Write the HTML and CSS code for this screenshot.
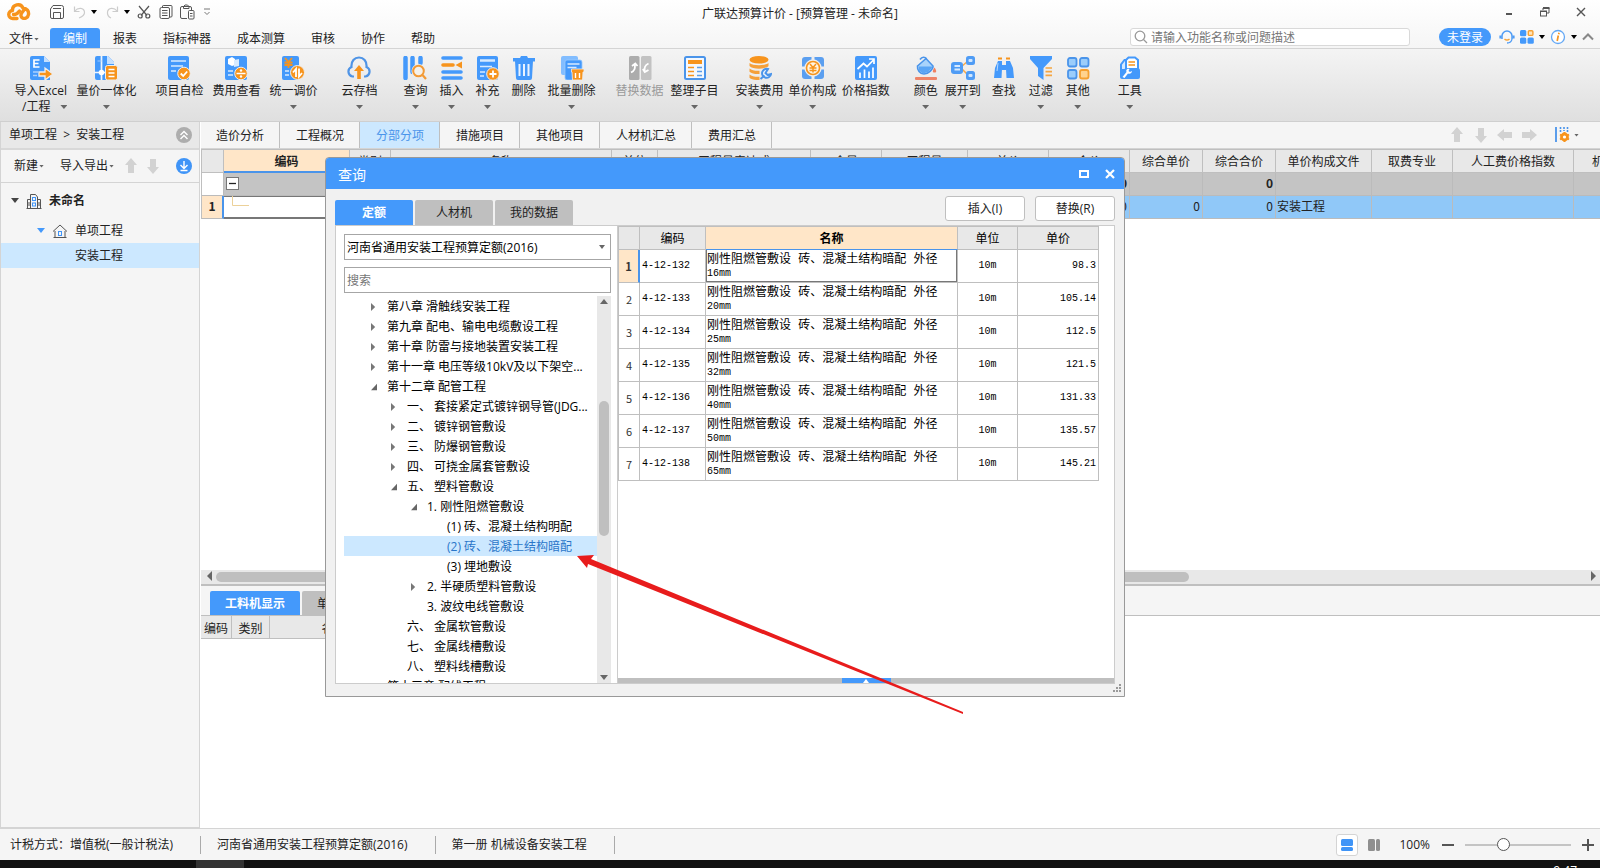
FILE: index.html
```html
<!DOCTYPE html>
<html lang="zh-CN">
<head>
<meta charset="utf-8">
<title>广联达预算计价 - [预算管理 - 未命名]</title>
<link rel="stylesheet" href="styles.css">
</head>
<body>
<div class="app">
  <header class="top">
    <div class="titlebar">
      <div class="quick">
        <svg class="logo" width="24" height="18" viewBox="0 0 24 18"><g fill="none" stroke="#f7941d" stroke-width="3.400" stroke-linecap="round" stroke-linejoin="round"><path d="M10 15.500H6a4 4 0 0 1-.5-8A5.500 5.500 0 0 1 16 5c4 .5 6 3 5.500 6.500-.5 3.500-4 4.500-6 3.500-2-1-2-3.500-.5-5.500L17 7"/><path d="M6.500 11.500c3 .5 4-1 6-3.500"/></g></svg>
        <button class="q save" aria-label="保存"><svg width="16" height="16" viewBox="0 0 16 16" fill="none" stroke="#555"><path d="M1.500 13V5L4 1.500h8.500a2 2 0 0 1 2 2V13a1.500 1.500 0 0 1-1.500 1.500H3A1.500 1.500 0 0 1 1.500 13zM4 4.500h8M4.500 14.500v-6h7v6"/></svg></button>
        <button class="q undo" aria-label="撤销"><svg width="14" height="14" viewBox="0 0 14 14" fill="none" stroke="#ccc" stroke-width="1.200"><path d="M1.500 1.500v5h5M2 6c3-4 9-3.500 9.500 1 .3 3-3 5-5.500 6"/></svg></button>
        <span class="tri black"></span>
        <button class="q redo" aria-label="恢复"><svg width="14" height="14" viewBox="0 0 14 14" fill="none" stroke="#ccc" stroke-width="1.200"><path d="M12.500 1.500v5h-5M12 6C9 2 3 2.500 2.500 7c-.3 3 1 5 3.500 6"/></svg></button>
        <span class="tri black"></span>
        <button class="q cut" aria-label="剪切"><svg width="14" height="14" viewBox="0 0 14 14" fill="none" stroke="#555" stroke-width="1.200"><path d="M2 1l8 9.500M12 1L4 10.500"/><circle cx="3.200" cy="11" r="2"/><circle cx="10.800" cy="11" r="2"/></svg></button>
        <button class="q copy" aria-label="复制"><svg width="14" height="16" viewBox="0 0 14 16" fill="none" stroke="#555"><path d="M3.500 3V2A.8.8 0 0 1 4.300 1.500H12a1 1 0 0 1 1 1V12a1 1 0 0 1-1 1h-1"/><rect x="1" y="3.500" width="9.500" height="11" rx="1.500"/><path d="M3 6.500h5.500M3 9h5.500M3 11.500h5.500"/></svg></button>
        <button class="q paste" aria-label="粘贴"><svg width="15" height="16" viewBox="0 0 15 16" fill="none" stroke="#555"><path d="M7 14.500H2A1.500 1.500 0 0 1 .5 13V4A1.500 1.500 0 0 1 2 2.500h8A1.500 1.500 0 0 1 11.500 4v2M3.500 4.500v-2L5 1h2.500L9 2.500v2z"/><rect x="8.500" y="6.500" width="5.500" height="8.500" rx="1"/><path d="M10 9.500h2.500M10 12h2.500"/></svg></button>
        <svg width="8" height="8" viewBox="0 0 8 8" fill="none" stroke="#777"><path d="M1 1h6M1.500 4L4 6.500 6.500 4"/></svg>
      </div>
      <h1 class="title">广联达预算计价 - [预算管理 - 未命名]</h1>
      <div class="winbtns">
        <button aria-label="最小化"><svg width="12" height="12" viewBox="0 0 12 12"><path d="M3 8h6" stroke="#555" stroke-width="2"/></svg></button>
        <button aria-label="还原"><svg width="12" height="12" viewBox="0 0 12 12" fill="none" stroke="#555"><path d="M4 4V2h6v5H8"/><path d="M4 2h6.500" stroke-width="2"/><rect x="1.500" y="5" width="6" height="5"/><path d="M1.500 5.500h6"/></svg></button>
        <button aria-label="关闭"><svg width="12" height="12" viewBox="0 0 12 12"><path d="M2 2l8 8M10 2l-8 8" stroke="#555" stroke-width="1.400"/></svg></button>
      </div>
    </div>
    <div class="menubar">
      <nav class="menus">
        <button class="file">文件<span class="tri"></span></button>
        <button class="on">编制</button><button>报表</button><button>指标神器</button><button>成本测算</button><button>审核</button><button>协作</button><button>帮助</button>
      </nav>
      <label class="find"><svg width="14" height="14" viewBox="0 0 14 14" fill="none" stroke="#999" stroke-width="1.300"><circle cx="6" cy="6" r="4.800"/><path d="M9.500 9.500L13 13"/></svg><input type="text" placeholder="请输入功能名称或问题描述"></label>
      <div class="account">
        <button class="login">未登录</button>
        <svg width="16" height="16" viewBox="0 0 16 16" fill="none"><path d="M3 10V7a5 5 0 0 1 10 0v3" stroke="#4f9cf5" stroke-width="1.500"/><path d="M1.500 6.500v3M14.500 6.500v3" stroke="#4f9cf5" stroke-width="2.200"/><path d="M13 10c-.5 3-3 4-5 4" stroke="#4f9cf5" stroke-width="1.300"/><path d="M5.500 10c1.500 1.300 3.500 1.300 5 0" stroke="#f7a030" stroke-width="1.500"/></svg>
        <svg width="14" height="14" viewBox="0 0 14 14"><g fill="#4499fb"><rect width="6.300" height="6.300" rx="1.500"/><rect y="7.500" width="6.300" height="6.300" rx="1.500"/><rect x="7.500" y="7.500" width="6.300" height="6.300" rx="1.500"/></g><rect x="8.300" y=".8" width="4.600" height="4.600" rx="1" fill="#ffe3b8" stroke="#f7a030" stroke-width="1.400"/></svg>
        <span class="tri black"></span>
        <svg width="16" height="16" viewBox="0 0 16 16"><circle cx="8" cy="8" r="6.500" fill="#fff" stroke="#64a8f5" stroke-width="1.300"/><path d="M9 3.800l-.3 1.400M8.300 6.500L7.200 12" stroke="#f7941d" stroke-width="1.700"/></svg>
        <span class="tri black"></span>
        <svg width="12" height="8" viewBox="0 0 12 8" fill="none" stroke="#888" stroke-width="2"><path d="M1 6.500l5-5 5 5"/></svg>
      </div>
    </div>
  </header>

  <div class="ribbon">
    <div class="grp g1">
      <button><svg viewBox="0 0 24 24"><path d="M3 0h12l6 6v18H3a2 2 0 0 1-2-2V2a2 2 0 0 1 2-2z" fill="#4499fb"/><path d="M15 0l6 6h-6z" fill="#c5e0ff"/><path d="M5 4h5.500M5 7.500h4.500M5 11h5.500M5 3.200v8.600" stroke="#fff" stroke-width="1.700"/><path d="M4 16h5M4 19.500h4" stroke="#a9d0ff" stroke-width="1.500"/><path d="M10 16h6v-4l8 6-8 6v-4h-6z" fill="#f7941d" stroke="#eee" stroke-width="1.300"/></svg><span>导入Excel</span><span class="line2">/工程<i class="tri"></i></span></button>
      <button><svg viewBox="0 0 24 24"><path d="M3 0h11l6 6v18H3a2 2 0 0 1-2-2V2a2 2 0 0 1 2-2z" fill="#4499fb"/><path d="M13 0h1l6 6v2h-7z" fill="#c5e0ff"/><path d="M7.500 0v24M0 16.500h14" stroke="#eef5fd" stroke-width="1.700"/><circle cx="7.500" cy="16.500" r="2.800" fill="#fff"/><path d="M3.500 5h4" stroke="#9bc9ff"/><rect x="11.500" y="9.500" width="12" height="14.500" rx="2" fill="#f7941d" stroke="#eee"/><path d="M14.500 13.500h6M14.500 17h6M14.500 20.400h6" stroke="#fff" stroke-width="1.500"/></svg><span>量价一体化</span><i class="tri"></i></button>
    </div>
    <div class="grp g2">
      <button><svg viewBox="0 0 24 24"><rect x="1" y="0" width="21" height="24" rx="2" fill="#4499fb"/><path d="M4 5h15M4 10h12M4 15h5" stroke="#d6eaff" stroke-width="1.700"/><circle cx="17" cy="17.500" r="6.300" fill="#f7941d" stroke="#eee"/><path d="M13.700 17.500l2.500 2.500 4-4.500" fill="none" stroke="#fff" stroke-width="1.800"/></svg><span>项目自检</span></button>
      <button><svg viewBox="0 0 24 24"><rect x="1" y="0" width="22" height="24" rx="2" fill="#4499fb"/><path d="M4 3l4-2 3 2v6l-3 1-4-2z" fill="#fff"/><path d="M10 4l5-1v7l-5 1z" fill="#d6eaff"/><path d="M4 15h5M4 19h5" stroke="#d6eaff" stroke-width="1.700"/><circle cx="17" cy="17.500" r="6.300" fill="#f7941d" stroke="#eee"/><path d="M12.500 17.500h9" stroke="#fff" stroke-width="1.500"/><circle cx="17" cy="14.500" r="1.200" fill="#fff"/><circle cx="17" cy="20.500" r="1.200" fill="#fff"/></svg><span>费用查看</span></button>
      <button><svg viewBox="0 0 24 24"><rect x="1" y="0" width="17" height="24" rx="2" fill="#4499fb"/><path d="M4 2l3.500 4L11 2M3.500 6.500h8M3.500 9h8M7.500 6v6" fill="none" stroke="#f7941d" stroke-width="1.800"/><path d="M4 15h4M4 19h4" stroke="#d6eaff" stroke-width="1.700"/><circle cx="16.500" cy="16.500" r="7" fill="#f7941d" stroke="#eee"/><path d="M15 21v-8l-3 3.500M18 12.500v8l3-3.500" fill="none" stroke="#fff" stroke-width="1.800"/></svg><span>统一调价</span><i class="tri"></i></button>
    </div>
    <div class="grp g3">
      <button><svg viewBox="0 0 24 24"><path d="M7 20.500H5.500a5 5 0 0 1-1-9.500C4 5 7.500 1.500 12 1.500S20 5 19.500 11a5 5 0 0 1-1 9.500H17" fill="none" stroke="#4f94e6" stroke-width="2.200"/><path d="M12 9l5 6h-3.200v8h-3.600v-8H7z" fill="#f7941d"/></svg><span>云存档</span><i class="tri"></i></button>
    </div>
    <div class="grp g4">
      <button><svg viewBox="0 0 24 24"><path d="M2.500 2v20M9.500 2v14M17.500 2v5" stroke="#4499fb" stroke-width="4.500" stroke-linecap="round"/><circle cx="15.500" cy="15" r="7" fill="#eee"/><circle cx="15.500" cy="15" r="5.300" fill="#f5f1ea" stroke="#f39a35" stroke-width="2"/><path d="M19.500 19l3.500 4" stroke="#f39a35" stroke-width="2.200"/></svg><span>查询</span><i class="tri"></i></button>
      <button><svg viewBox="0 0 24 24"><path d="M3 2h18M3 16h18M3 22h18" stroke="#4499fb" stroke-width="3.600" stroke-linecap="round"/><path d="M3 9h10" stroke="#f7941d" stroke-width="3.600" stroke-linecap="round"/><path d="M15.500 9l6.500-3.500v7z" fill="#f7941d"/></svg><span>插入</span><i class="tri"></i></button>
      <button><svg viewBox="0 0 24 24"><rect x="1" y="0" width="21" height="24" rx="2" fill="#4499fb"/><path d="M4 4.500h15" stroke="#d6eaff" stroke-width="2.500"/><path d="M4 10.500h12M4 16h5M4 20h4" stroke="#d6eaff" stroke-width="1.600"/><circle cx="17" cy="18" r="6.300" fill="#f7941d" stroke="#eee"/><path d="M17 14.500v7M13.500 18h7" stroke="#fff" stroke-width="1.800"/></svg><span>补充</span><i class="tri"></i></button>
      <button><svg viewBox="0 0 24 24"><path d="M1 2h7l1-2h6l1 2h7v3.500H1zM3 5h18l-1 17a2 2 0 0 1-2 2H6a2 2 0 0 1-2-2z" fill="#4499fb"/><path d="M7.500 8v12M12 8v12M16.500 8v12" stroke="#e9f3ff" stroke-width="2"/></svg><span>删除</span></button>
      <button><svg viewBox="0 0 24 24"><rect x="1" y="0" width="17" height="19" rx="2" fill="#82bdff"/><rect x="5" y="4" width="17" height="20" rx="2" fill="#4499fb" stroke="#9bcaff" stroke-width=".8"/><path d="M7.500 8h12M7.500 11.500h9" stroke="#d6eaff" stroke-width="1.300"/><path d="M11.500 13h12.500v3H23l-.5 8h-10l-.5-8h-.5z" fill="#f7941d" stroke="#eee" stroke-width=".8"/><path d="M15.500 17v5M19.500 17v5" stroke="#fff" stroke-width="1.400"/></svg><span>批量删除</span><i class="tri"></i></button>
    </div>
    <div class="grp g5">
      <button disabled><svg viewBox="0 0 24 24"><rect x="1" y="0" width="10.500" height="24" rx="1.500" fill="#acacac"/><rect x="13" y="0" width="10.500" height="24" rx="1.500" fill="#c2c2c2"/><path d="M3 16.500c4-2 4-4 4-8M4 10l3.300-2.500L9.500 10M20.500 7.500c-4 2-4 4-4 8M14.800 13l2 3 3.700-2" fill="none" stroke="#fff" stroke-width="1.800"/></svg><span>替换数据</span></button>
      <button><svg viewBox="0 0 24 24"><rect x="2" y="1" width="20" height="22" rx="1.500" fill="#f4f8fd" stroke="#4a94ea" stroke-width="2"/><rect x="5" y="4" width="14" height="4" fill="#f7941d"/><path d="M14 11.500h5M14 15.500h5M14 19.500h5" stroke="#5b9de8" stroke-width="1.600"/><path d="M5 11.500h6M5 15.500h6M5 19.500h6" stroke="#f7941d" stroke-width="1.600"/></svg><span>整理子目</span><i class="tri"></i></button>
    </div>
    <div class="grp g6">
      <button><svg viewBox="0 0 24 24"><ellipse cx="11" cy="3.800" rx="9.500" ry="3.800" fill="#f7941d"/><path d="M1.500 7c3 3 16 3 19 0v3c-3 3.500-16 3.500-19 0zM1.500 12.500c2 2 6 2.500 10 2.300v3.200c-4 .3-8-.5-10-2.300zM1.500 18.500c2 2 6 2.500 10 2.300V24c-4 .3-8-.5-10-2.300z" fill="#f5a03a"/><path d="M20 13a4.500 4.500 0 1 0 3 5l-3.500 1-2-2z" fill="#eef5fd" stroke="#4a94ea" stroke-width="2"/><path d="M16.500 19.500L12.500 23" stroke="#4a94ea" stroke-width="2"/></svg><span>安装费用</span><i class="tri"></i></button>
      <button><svg viewBox="0 0 24 24"><rect x="1" y="1" width="22" height="22" rx="3" fill="#5b9ff0"/><path d="M12 0v24M0 12h24" stroke="#eee" stroke-width="3"/><circle cx="12" cy="12" r="8" fill="#f7941d" stroke="#eee" stroke-width="1.300"/><circle cx="12" cy="12" r="5.700" fill="#fff4e2"/><path d="M9 8l3 3.500L15 8M8.500 12h7M8.500 14.500h7M12 11.500v5" fill="none" stroke="#f7941d" stroke-width="1.500"/></svg><span>单价构成</span><i class="tri"></i></button>
      <button><svg viewBox="0 0 24 24"><rect x="1" y="0" width="22" height="24" rx="2" fill="#4499fb"/><path d="M3.500 13l6-5.500 3.500 3L19.500 4M15 3h5v5" fill="none" stroke="#fff" stroke-width="1.700"/><path d="M6 16.500V22M10.500 13.500V22M15 15.500V22M19 11.500V22" stroke="#fff" stroke-width="1.700"/></svg><span>价格指数</span></button>
    </div>
    <div class="grp g7">
      <button><svg viewBox="0 0 24 24"><path d="M3.500 10L12 2.500l7 7.500c.5 3-4.500 8-9 8-4 0-7-4-6.500-8z" fill="#a9d3fb" stroke="#4a94ea" stroke-width="1.600"/><path d="M5 10.500h14l-5 5.500-5 1.500-4-3z" fill="#5aa5f5"/><path d="M6 3.500C8 .5 11 .5 12.500 3" fill="none" stroke="#4a94ea" stroke-width="1.600"/><path d="M20.500 11.500c2 3 2.500 5 0 5s-2-2 0-5z" fill="#f08060"/><rect x="1" y="21" width="22" height="3" rx="1" fill="#ee8468"/></svg><span>颜色</span><i class="tri"></i></button>
      <button><svg viewBox="0 0 24 24"><path d="M10 11l7-6M10 12l7 7" stroke="#f7a948" stroke-width="1.500"/><rect x="0" y="6" width="12" height="12" rx="3" fill="#4f9cf5"/><path d="M3.500 10h5.500M3.500 13.500h5.500" stroke="#d6eaff" stroke-width="2"/><rect x="15" y="0" width="9" height="9" rx="2.500" fill="#4f9cf5"/><rect x="17.500" y="3" width="4" height="3" rx="1" fill="#cfe6ff"/><rect x="15" y="15" width="9" height="9" rx="2.500" fill="#4f9cf5"/><rect x="17.500" y="18" width="4" height="3" rx="1" fill="#cfe6ff"/></svg><span>展开到</span><i class="tri"></i></button>
    </div>
    <div class="grp g8">
      <button><svg viewBox="0 0 24 24"><path d="M6 5h4v8l-.5 9H2l1-10zM14 5h4l3 7 1 10h-7.500L14 13z" fill="#4499fb"/><path d="M10 9h4v5h-4z" fill="#4499fb"/><path d="M6 2.500h4M14 2.500h4" stroke="#f7941d" stroke-width="2"/><path d="M5 15l1-8" stroke="#d6eaff" stroke-width=".8"/></svg><span>查找</span></button>
      <button><svg viewBox="0 0 24 24"><path d="M1 0h22v3l-8.500 9v12L9 20v-8L1 3z" fill="#4499fb"/><path d="M16.500 12h6.500M16.500 15.700h6.500M16.500 19.400h6.500" stroke="#f5a642" stroke-width="1.700"/></svg><span>过滤</span><i class="tri"></i></button>
      <button><svg viewBox="0 0 24 24" fill="#9bcdfb" stroke="#4a94ea" stroke-width="1.800"><rect x="2" y="2" width="8.500" height="8.500" rx="2"/><rect x="14" y="2" width="8.500" height="8.500" rx="2"/><rect x="2" y="14" width="8.500" height="8.500" rx="2"/><rect x="14" y="14" width="8.500" height="8.500" rx="2" fill="#ffd38f" stroke="#f5a030"/></svg><span>其他</span><i class="tri"></i></button>
    </div>
    <div class="grp g9">
      <button><svg viewBox="0 0 24 24"><path d="M3 14V8.500L6.500 4H8v10z" fill="#d6eaff" stroke="#4499fb" stroke-width="2"/><path d="M8 14V4l2.500-2.500H17L20 4v10z" fill="#fff" stroke="#4499fb" stroke-width="2"/><path d="M10.500 6h6.500M10.500 9h6.500" stroke="#f7941d" stroke-width="1.600"/><path d="M10 12h9.500a2.500 2.500 0 0 1 2.500 2.500V21a2 2 0 0 1-2 2H4a2 2 0 0 1-2-2v-7z" fill="#4499fb"/><path d="M4.500 21l4-5c-1-2 1-4 3-3l-1 2 1.500 1 2-1c0 2-2 3.500-4 2.500l-3.500 4.500z" fill="#fff"/></svg><span>工具</span><i class="tri"></i></button>
    </div>
  </div>

  <div class="work">
    <aside class="side">
      <div class="crumb"><span>单项工程&nbsp; &gt; &nbsp;安装工程</span><button aria-label="收起"><svg width="16" height="16" viewBox="0 0 16 16"><circle cx="8" cy="8" r="8" fill="#adadad"/><path d="M4.500 8L8 4.500 11.500 8M4.500 12L8 8.500l3.500 3.500" fill="none" stroke="#fff" stroke-width="1.400"/></svg></button></div>
      <div class="sidetools">
        <button>新建<span class="tri"></span></button>
        <button class="imp">导入导出<span class="tri"></span></button>
        <svg width="12" height="16" viewBox="0 0 12 16"><path d="M6 0l6 7H9v8H3V7H0z" fill="#d2d2d2"/></svg>
        <svg width="12" height="16" viewBox="0 0 12 16"><path d="M6 16l6-7H9V1H3v8H0z" fill="#d2d2d2"/></svg>
        <button class="down" aria-label="下载"><svg width="16" height="16" viewBox="0 0 16 16"><circle cx="8" cy="8" r="8" fill="#3f94f7"/><path d="M8 3v7M4.500 7L8 10.500 11.500 7M4.500 12.500h7" fill="none" stroke="#fff" stroke-width="1.400"/></svg></button>
      </div>
      <ul class="proj">
        <li class="p0"><span class="tri big"></span><svg width="16" height="16" viewBox="0 0 16 16" fill="none" stroke="#555"><path d="M.5 15.500h15M1.500 15V6.500h3M4.500 15V1.500h5L11.500 4v11M11.500 6.500h3V15"/><path d="M3 9v4M13 9v4"/><g stroke="#3f94f7"><rect x="6.500" y="4.500" width="3" height="3"/><rect x="6.500" y="10" width="3" height="3"/></g></svg><b>未命名</b></li>
        <li class="p1"><span class="tri big blue"></span><svg width="16" height="16" viewBox="0 0 16 16" fill="none" stroke="#555"><path d="M1 8.500L8 2l7 6.500M3 8v6.500M13 8v6.500M1.500 14.500h13"/><rect x="6.500" y="8.500" width="3" height="4" stroke="#3f94f7"/></svg><span>单项工程</span></li>
        <li class="p2 cur">安装工程</li>
      </ul>
    </aside>

    <main class="main">
      <div class="tabs">
        <button>造价分析</button><button>工程概况</button><button class="on">分部分项</button><button>措施项目</button><button>其他项目</button><button>人材机汇总</button><button>费用汇总</button>
        <div class="nav">
          <svg width="16" height="16" viewBox="0 0 16 16"><path d="M8 0l6 7h-3v8H5V7H2z"/></svg>
          <svg width="16" height="16" viewBox="0 0 16 16"><path d="M8 16l6-7h-3V1H5v8H2z"/></svg>
          <svg width="16" height="16" viewBox="0 0 16 16"><path d="M0 8l7-6v3h8v6H7v3z"/></svg>
          <svg width="16" height="16" viewBox="0 0 16 16"><path d="M16 8L9 2v3H1v6h8v3z"/></svg>
          <button class="cols" aria-label="列设置"><svg width="16" height="16" viewBox="0 0 16 16"><path d="M2 0v15" stroke="#4a94ea" stroke-width="1.800"/><path d="M6.500 0v6M10 0v4M13.500 0v5" stroke="#4a94ea" stroke-width="1.600" stroke-dasharray="2 1"/><circle cx="10.500" cy="10" r="3" fill="none" stroke="#f7941d" stroke-width="2.800"/><path d="M10.500 5v10M6 7.500l9 5M6 12.500l9-5" stroke="#f7941d" stroke-width="2"/><circle cx="10.500" cy="10" r="1.600" fill="#fff"/></svg><span class="tri"></span></button>
        </div>
      </div>
      <div class="sheet">
        <table class="grid">
          <colgroup><col class="w22"><col class="w126"><col class="w41"><col class="w221"><col class="w46"><col class="w153"><col class="w71"><col class="w86"><col class="w81"><col class="w81"><col class="w73"><col class="w73"><col class="w96"><col class="w81"><col class="w121"><col class="w121"></colgroup>
          <thead><tr><th></th><th class="hot">编码</th><th>类别</th><th>名称</th><th>单位</th><th>工程量表达式</th><th>含量</th><th>工程量</th><th>单价</th><th>合价</th><th>综合单价</th><th>综合合价</th><th>单价构成文件</th><th>取费专业</th><th>人工费价格指数</th><th>机械费价格指数</th></tr></thead>
          <tbody>
            <tr class="sum"><td class="rh"></td><td class="fold"><button aria-label="折叠"><svg width="13" height="13" viewBox="0 0 13 13"><rect x=".5" y=".5" width="12" height="12" fill="#fff" stroke="#777"/><path d="M3 6.500h7" stroke="#222" stroke-width="1.300"/></svg></button></td><td></td><td></td><td></td><td></td><td></td><td></td><td></td><td class="n">0</td><td></td><td class="n">0</td><td></td><td></td><td></td><td></td></tr>
            <tr class="sel"><td class="rh">1</td><td class="edit"><svg width="24" height="19" viewBox="0 0 24 19"><path d="M6.500 0v9.500H23" fill="none" stroke="#ecd199"/></svg></td><td></td><td></td><td></td><td></td><td></td><td></td><td></td><td class="n">0</td><td class="n">0</td><td class="n">0</td><td class="t">安装工程</td><td></td><td></td><td></td></tr>
          </tbody>
        </table>
      </div>
      <div class="hscroll"><svg width="6" height="10" viewBox="0 0 6 10"><path d="M5 0v10L0 5z" fill="#666"/></svg><div class="track"><div class="thumb"></div></div><svg width="6" height="10" viewBox="0 0 6 10"><path d="M1 0v10l5-5z" fill="#666"/></svg></div>
      <div class="subtabs"><button class="on">工料机显示</button><button>单价构成</button></div>
      <div class="detail">
        <table class="grid sub"><colgroup><col class="w31"><col class="w38"><col class="w128"></colgroup><thead><tr><th>编码</th><th>类别</th><th>名称</th></tr></thead></table>
      </div>
    </main>
  </div>

  <footer class="status">
    <span class="s1">计税方式：增值税(一般计税法)</span><span class="s2">河南省通用安装工程预算定额(2016)</span><span class="s3">第一册 机械设备安装工程</span>
    <div class="zoomer">
      <button class="view on" aria-label="上下布局"><svg width="12" height="12" viewBox="0 0 12 12" fill="#3f94f7"><rect width="12" height="7" rx="1.500"/><rect y="8" width="12" height="4" rx="1.500"/></svg></button>
      <button class="view" aria-label="左右布局"><svg width="12" height="12" viewBox="0 0 12 12" fill="#8f8f8f"><rect width="7" height="12" rx="1.500"/><rect x="8" width="4" height="12" rx="1.500"/></svg></button>
      <label for="zoom">100%</label>
      <button aria-label="缩小"><svg width="12" height="12" viewBox="0 0 12 12"><path d="M0 6h12" stroke="#555" stroke-width="2"/></svg></button>
      <input id="zoom" type="range" min="0" max="100" value="34">
      <button aria-label="放大"><svg width="12" height="12" viewBox="0 0 12 12"><path d="M0 6h12M6 0v12" stroke="#555" stroke-width="2"/></svg></button>
    </div>
  </footer>
  <div class="taskbar"><span class="task"></span><span class="clock">9:47</span></div>

  <section class="dialog" role="dialog" aria-labelledby="dlg">
    <div class="dhead"><h2 id="dlg">查询</h2>
      <button aria-label="最大化"><svg width="12" height="12" viewBox="0 0 12 12"><rect x="2" y="3" width="8" height="6" fill="none" stroke="#fff" stroke-width="2"/></svg></button>
      <button aria-label="关闭"><svg width="12" height="12" viewBox="0 0 12 12"><path d="M2 2l8 8M10 2l-8 8" stroke="#fff" stroke-width="2.200"/></svg></button>
    </div>
    <div class="dbar">
      <button class="dt on">定额</button><button class="dt">人材机</button><button class="dt">我的数据</button>
      <button class="act">插入(I)</button><button class="act">替换(R)</button>
    </div>
    <div class="dbody">
      <div class="left">
        <div class="pick"><select aria-label="定额库"><option>河南省通用安装工程预算定额(2016)</option></select><span class="tri"></span></div>
        <input class="srch" type="text" placeholder="搜索" aria-label="搜索">
        <div class="treebox">
          <ul class="tree">
            <li class="l0"><i class="c"></i><span>第八章 滑触线安装工程</span></li>
            <li class="l0"><i class="c"></i><span>第九章 配电、输电电缆敷设工程</span></li>
            <li class="l0"><i class="c"></i><span>第十章 防雷与接地装置安装工程</span></li>
            <li class="l0"><i class="c"></i><span>第十一章 电压等级10kV及以下架空...</span></li>
            <li class="l0"><i class="o"></i><span>第十二章 配管工程</span></li>
            <li class="l1"><i class="c"></i><span>一、 套接紧定式镀锌钢导管(JDG...</span></li>
            <li class="l1"><i class="c"></i><span>二、 镀锌钢管敷设</span></li>
            <li class="l1"><i class="c"></i><span>三、 防爆钢管敷设</span></li>
            <li class="l1"><i class="c"></i><span>四、 可挠金属套管敷设</span></li>
            <li class="l1"><i class="o"></i><span>五、 塑料管敷设</span></li>
            <li class="l2"><i class="o"></i><span>1. 刚性阻燃管敷设</span></li>
            <li class="l3"><i></i><span>(1) 砖、混凝土结构明配</span></li>
            <li class="l3 cur"><i></i><span>(2) 砖、混凝土结构暗配</span></li>
            <li class="l3"><i></i><span>(3) 埋地敷设</span></li>
            <li class="l2"><i class="c"></i><span>2. 半硬质塑料管敷设</span></li>
            <li class="l2"><i></i><span>3. 波纹电线管敷设</span></li>
            <li class="l1"><i></i><span>六、 金属软管敷设</span></li>
            <li class="l1"><i></i><span>七、 金属线槽敷设</span></li>
            <li class="l1"><i></i><span>八、 塑料线槽敷设</span></li>
            <li class="l0"><i></i><span>第十三章 配线工程</span></li>
          </ul>
          <div class="vscroll"><svg width="8" height="5" viewBox="0 0 8 5"><path d="M0 5h8L4 0z" fill="#666"/></svg><div class="vtrack"><div class="vthumb"></div></div><svg width="8" height="5" viewBox="0 0 8 5"><path d="M0 0h8L4 5z" fill="#666"/></svg></div>
        </div>
      </div>
      <div class="right">
        <table class="quota">
          <colgroup><col class="w21"><col class="w66"><col class="w252"><col class="w60"><col class="w81"></colgroup>
          <thead><tr><th></th><th>编码</th><th class="hot">名称</th><th>单位</th><th>单价</th></tr></thead>
          <tbody>
            <tr class="first"><td class="rh">1</td><td class="m">4-12-132</td><td class="nm">刚性阻燃管敷设 砖、混凝土结构暗配 外径<span>16mm</span></td><td class="m u">10m</td><td class="m n">98.3</td></tr>
            <tr><td class="rh">2</td><td class="m">4-12-133</td><td class="nm">刚性阻燃管敷设 砖、混凝土结构暗配 外径<span>20mm</span></td><td class="m u">10m</td><td class="m n">105.14</td></tr>
            <tr><td class="rh">3</td><td class="m">4-12-134</td><td class="nm">刚性阻燃管敷设 砖、混凝土结构暗配 外径<span>25mm</span></td><td class="m u">10m</td><td class="m n">112.5</td></tr>
            <tr><td class="rh">4</td><td class="m">4-12-135</td><td class="nm">刚性阻燃管敷设 砖、混凝土结构暗配 外径<span>32mm</span></td><td class="m u">10m</td><td class="m n">121.5</td></tr>
            <tr><td class="rh">5</td><td class="m">4-12-136</td><td class="nm">刚性阻燃管敷设 砖、混凝土结构暗配 外径<span>40mm</span></td><td class="m u">10m</td><td class="m n">131.33</td></tr>
            <tr><td class="rh">6</td><td class="m">4-12-137</td><td class="nm">刚性阻燃管敷设 砖、混凝土结构暗配 外径<span>50mm</span></td><td class="m u">10m</td><td class="m n">135.57</td></tr>
            <tr><td class="rh">7</td><td class="m">4-12-138</td><td class="nm">刚性阻燃管敷设 砖、混凝土结构暗配 外径<span>65mm</span></td><td class="m u">10m</td><td class="m n">145.21</td></tr>
          </tbody>
        </table>
        <div class="splitter"><button aria-label="展开"><svg width="6" height="4" viewBox="0 0 6 4"><path d="M0 4h6L3 0z" fill="#fff"/></svg></button></div>
      </div>
    </div>
    <svg class="grip" width="9" height="9" viewBox="0 0 9 9" fill="#999"><path d="M6 0h2v2H6zM3 3h2v2H3zM6 3h2v2H6zM0 6h2v2H0zM3 6h2v2H3zM6 6h2v2H6z"/></svg>
  </section>
  <svg class="pointer" width="390" height="162" viewBox="0 0 390 162"><path d="M1 1l17-1-3 4 372 153v2L12 9l-1 4z" fill="#e81c1c"/></svg>
</div>
</body>
</html>
```
FILE: styles.css
```css
* { box-sizing: border-box; }
body { margin: 0; font: 12px/16px "Open Sans", "Noto Sans CJK SC", sans-serif; color: #222; background: #fff; }
button, input, select { font: inherit; color: inherit; border: 0; padding: 0; margin: 0; background: none; border-radius: 0; }
button { display: flex; align-items: center; justify-content: center; white-space: nowrap; }
svg { display: block; flex: none; }
ul { list-style: none; margin: 0; padding: 0; }
h1, h2 { margin: 0; font: inherit; }
input:focus, select:focus { outline: none; }

.tri { display: inline-block; flex: none; width: 5px; height: 3px; background: #666; clip-path: polygon(0 0, 100% 0, 50% 100%); }
.tri.black { background: #000; width: 6px; height: 4px; }
.tri.big { width: 8px; height: 5px; background: #444; }
.tri.blue { background: #4499fb; }

.app { position: relative; display: flex; flex-direction: column; height: 100vh; overflow: hidden; }
.top { background: linear-gradient(#fff, #f5f5f5); border-bottom: 1px solid #d4d4d4; }
.titlebar { display: grid; grid-template-columns: 1fr auto 1fr; height: 28px; align-items: center; }
.quick { display: flex; align-items: center; padding: 0 0 4px 7px; }
.quick .save { margin-left: 18px; }
.quick .undo { margin: 0 4px 0 8px; }
.quick .redo { margin: 0 5px 0 8px; }
.quick .cut { margin-left: 7px; }
.quick .copy { margin: 0 7px 0 8px; }
.quick .paste { margin-right: 8px; }
.winbtns { display: flex; justify-content: flex-end; gap: 24px; padding: 0 13px 4px 0; }
.menubar { display: flex; height: 20px; align-items: stretch; padding-right: 6px; }
.menus { display: flex; flex: 1; }
.menus button { padding: 2px 13px 0; }
.menus .file { padding: 2px 11px 0 9px; gap: 1px; }
.menus .on { background: #4499fb; color: #fff; border-radius: 3px 3px 0 0; }
.find { display: flex; align-items: center; gap: 3px; width: 280px; height: 18px; padding: 0 3px; background: #fff; border: 1px solid #d9d9d9; border-radius: 3px; }
.find input { flex: 1; min-width: 0; padding-top: 1px; }
.find input::placeholder { color: #767676; }
.account { display: flex; align-items: center; margin-left: 29px; height: 18px; gap: 5px; }
.account .login { width: 52px; height: 18px; padding-top: 1px; border-radius: 9px; background: #4499fb; color: #fff; margin-right: 3px; }

.ribbon { display: flex; flex: none; height: 73px; padding: 7px 0 0 14px; background: linear-gradient(#f4f4f4, #dfdfdf); border-bottom: 1px solid #cfcfcf; overflow: hidden; }
.grp { display: flex; align-items: flex-start; }
.grp button { flex-direction: column; justify-content: flex-start; }
.grp button > svg { width: 24px; height: 24px; margin-bottom: 3px; }
.grp .tri { width: 7px; height: 4px; }
.grp button > .tri { margin-top: 6px; }
.grp button:disabled { color: #999; }
.line2 { display: flex; align-items: center; gap: 10px; padding-left: 8px; }
.g1 { gap: 9px; }
.g2 { gap: 9px; margin-left: 19px; }
.g3 { margin-left: 24px; }
.g4 { gap: 12px; margin-left: 26px; }
.g5 { gap: 7px; margin-left: 20px; }
.g6 { gap: 5px; margin-left: 17px; }
.g7 { gap: 7px; margin-left: 24px; }
.g8 { gap: 13px; margin-left: 11px; }
.g9 { margin-left: 28px; }

.work { display: flex; flex: 1; min-height: 0; }
.side { flex: none; width: 200px; background: #f5f5f5; border: 1px solid #d4d4d4; border-top: 0; }
.crumb { display: flex; align-items: center; justify-content: space-between; height: 28px; padding: 0 7px 0 8px; background: #e8e8e8; border-bottom: 2px solid #d8d8d8; }
.sidetools { display: flex; align-items: center; height: 33px; padding: 0 7px 0 13px; border-bottom: 1px solid #d4d4d4; gap: 10px; }
.sidetools button { gap: 1px; }
.sidetools .imp { margin: 0 1px 0 6px; }
.sidetools .down { margin-left: auto; }
.proj li { display: flex; align-items: center; height: 25px; }
.proj .p0 { height: 35px; padding-left: 10px; gap: 7px; }
.proj .p1 { padding-left: 36px; gap: 7px; }
.proj .p2 { padding-left: 74px; }
.cur { background: #cce8ff; }

.main { flex: 1; min-width: 0; display: flex; flex-direction: column; margin-left: 1px; background: #fff; }
.tabs { display: flex; flex: none; height: 27px; background: #f5f5f5; border-bottom: 1px solid #d4d4d4; }
.tabs > button { padding: 2px 15px 0 16px; border-right: 1px solid #bfbfbf; }
.tabs > button:first-child { padding-left: 15px; }
.tabs .on { background: #cce8ff; color: #4a94ea; }
.nav { display: flex; flex: 1; justify-content: flex-end; align-items: center; gap: 8px; padding-right: 21px; fill: #d2d2d2; }
.cols { margin-left: 9px; gap: 4px; }
.sheet { flex: 1; min-height: 0; overflow: hidden; }
.grid, .quota { border-collapse: separate; border-spacing: 0; table-layout: fixed; width: 1px; font-family: "Noto Sans CJK SC", sans-serif; }
.grid th, .quota th { height: 23px; padding: 0; font-weight: normal; white-space: nowrap; background: #e8e8e8; border-right: 1px solid #bfbfbf; border-bottom: 1px solid #bfbfbf; }
.grid td { height: 23px; padding: 0 0 2px; border-right: 1px solid #bbb; border-bottom: 1px solid #bbb; }
.sheet .grid { border-top: 1px solid #bfbfbf; border-left: 1px solid #bfbfbf; }
.grid th.hot, .quota th.hot { background: #ffe6c8; font-weight: bold; border-bottom-color: #4a94ea; }
.grid th.hot { border-bottom-width: 2px; }
.sub th { padding-top: 1px; }
.sum td { background: #c4c4c4; font-weight: bold; }
.sel td { background: #90c8f8; }
.grid .rh { background: #fff; text-align: center; }
.sel .rh { background: #ffe6c8; font-weight: bold; border-right: 2px solid #4a94ea; }
.grid .fold { padding-left: 2px; }
.sel .edit { background: #fff; border-bottom: 2px solid #777; box-shadow: inset 0 1px #777; vertical-align: top; padding: 0 0 0 2px; }
.n { text-align: right; }
.grid .n { padding-right: 2px; }
.grid .t { padding-left: 1px; }
.w21 { width: 21px; } .w22 { width: 22px; } .w31 { width: 31px; } .w38 { width: 38px; } .w41 { width: 41px; } .w46 { width: 46px; }
.w60 { width: 60px; } .w66 { width: 66px; } .w71 { width: 71px; } .w73 { width: 73px; } .w81 { width: 81px; } .w86 { width: 86px; }
.w96 { width: 96px; } .w121 { width: 121px; } .w126 { width: 126px; } .w128 { width: 128px; } .w153 { width: 153px; } .w221 { width: 221px; } .w252 { width: 252px; }

.hscroll { display: flex; flex: none; align-items: center; height: 16px; padding: 0 4px 2px 6px; gap: 3px; background: #e8e8e8; border-bottom: 2px solid #bfbfbf; }
.track { flex: 1; }
.thumb { width: 71%; height: 10px; margin-top: 1px; background: #bfbfbf; border-radius: 5px; }
.subtabs { display: flex; flex: none; gap: 2px; height: 30px; padding: 5px 0 0 9px; background: #f5f5f5; border-bottom: 1px solid #bfbfbf; }
.subtabs button { height: 24px; padding: 1px 15px 0; background: #bfbfbf; border-radius: 2px 2px 0 0; }
.subtabs .on { background: #4499fb; color: #fff; font-weight: bold; }
.detail { flex: none; height: 212px; overflow: hidden; }

.status { display: flex; flex: none; align-items: center; height: 32px; padding: 0 6px 0 10px; background: #f5f5f5; border-top: 1px solid #d4d4d4; }
.status > span { border-right: 1px solid #aaa; line-height: 18px; white-space: nowrap; }
.s1 { width: 191px; }
.s2 { padding: 0 27px 0 16px; }
.s3 { padding: 0 27px 0 16px; }
.zoomer { display: flex; align-items: center; margin-left: auto; gap: 11px; }
.view { width: 22px; height: 22px; border: 1px solid transparent; border-radius: 3px; }
.view.on { border-color: #d4d4d4; background: #fff; margin-right: -6px; }
.zoomer label { margin: 0 1px 0 3px; }
.zoomer input { appearance: none; width: 106px; height: 14px; background: linear-gradient(#c4c4c4, #c4c4c4) center / 100% 2px no-repeat; }
.zoomer input::-webkit-slider-thumb { appearance: none; width: 13px; height: 13px; border: 1px solid #555; border-radius: 50%; background: #fff; }
.taskbar { display: flex; flex: none; justify-content: space-between; height: 8px; padding: 0 23px 0 196px; background: #111; color: #fff; overflow: hidden; }
.task { width: 48px; background: #333; }
.clock { padding-top: 3px; }

.dialog { position: absolute; left: 325px; top: 157px; width: 800px; height: 540px; display: flex; flex-direction: column; background: #f1f1f1; border: 1px solid #999; border-radius: 4px 4px 0 0; overflow: hidden; }
.dhead { display: flex; flex: none; align-items: center; gap: 14px; height: 31px; padding: 0 8px 0 12px; background: #4499fb; color: #fff; font-size: 14px; }
.dhead h2 { flex: 1; padding-top: 2px; }
.dbar { display: flex; flex: none; align-items: flex-end; gap: 2px; height: 36px; padding: 0 9px; }
.dt { width: 78px; height: 25px; background: #bfbfbf; border-radius: 2px 2px 0 0; }
.dt.on { background: #4499fb; color: #fff; font-weight: bold; }
.act { width: 80px; height: 25px; margin: 0 0 4px 8px; background: #fff; border: 1px solid #bfbfbf; border-radius: 3px; }
.dt + .act { margin-left: auto; }
.dbody { display: flex; flex: 1; min-height: 0; margin: 0 9px 12px; background: #fff; border: 1px solid #ccc; }
.left { display: flex; flex-direction: column; width: 282px; padding: 8px 6px 0 8px; border-right: 1px solid #ccc; }
.pick { display: flex; align-items: center; height: 26px; padding-right: 5px; border: 1px solid #a6a6a6; color: #000; }
.pick select { appearance: none; flex: 1; min-width: 0; height: 24px; padding: 2px 0 0 2px; }
.pick .tri { width: 6px; height: 4px; }
.srch { flex: none; height: 26px; margin: 7px 0 3px; padding-left: 2px; border: 1px solid #a6a6a6; }
.srch::placeholder { color: #767676; }
.treebox { display: flex; flex: 1; min-height: 0; overflow: hidden; }
.tree { flex: 1; min-width: 0; color: #000; }
.tree li { display: flex; align-items: center; height: 20px; padding-top: 2px; white-space: nowrap; }
.tree .l0 { padding-left: 27px; }
.tree .l1 { padding-left: 47px; }
.tree .l2 { padding-left: 67px; }
.tree .l3 { padding-left: 87px; }
.tree i { flex: none; width: 6px; height: 8px; margin-right: 10px; }
.tree .c { background: #777; clip-path: polygon(0 0, 70% 50%, 0 100%); }
.tree .o { background: #666; clip-path: polygon(100% 10%, 100% 90%, 0 90%); }
.tree .cur { color: #2a76c9; }
.vscroll { display: flex; flex-direction: column; align-items: center; width: 14px; padding: 3px 0; background: #e8e8e8; }
.vtrack { flex: 1; width: 10px; padding-top: 97px; }
.vthumb { height: 135px; background: #bfbfbf; border-radius: 5px; }
.right { display: flex; flex-direction: column; justify-content: space-between; flex: 1; min-width: 0; }
.quota { color: #000; border-left: 1px solid #bfbfbf; border-top: 1px solid #bfbfbf; }
.quota td { height: 33px; padding: 0 2px; border-right: 1px solid #bfbfbf; border-bottom: 1px solid #bfbfbf; line-height: 14px; white-space: nowrap; }
.quota .rh { text-align: center; color: #333; font-size: 11px; }
.quota .m, .quota .nm { font-family: "Liberation Mono", "Noto Sans CJK SC", monospace; }
.quota .m, .quota .nm span { font-size: 10px; }
.quota .nm { padding: 1px 1px 0; }
.quota .nm span { display: block; }
.quota .u { text-align: center; }
.first .rh { background: #ffe6c8; font-weight: bold; border-right: 2px solid #4a94ea; }
.first .nm { box-shadow: inset -1px -1px #777, inset 1px 0 #777; }
.splitter { display: flex; justify-content: center; height: 5px; background: #bfbfbf; }
.splitter button { width: 49px; height: 5px; background: #4499fb; }
.grip { position: absolute; right: 2px; bottom: 3px; }
.pointer { position: absolute; left: 576px; top: 555px; pointer-events: none; }
```
